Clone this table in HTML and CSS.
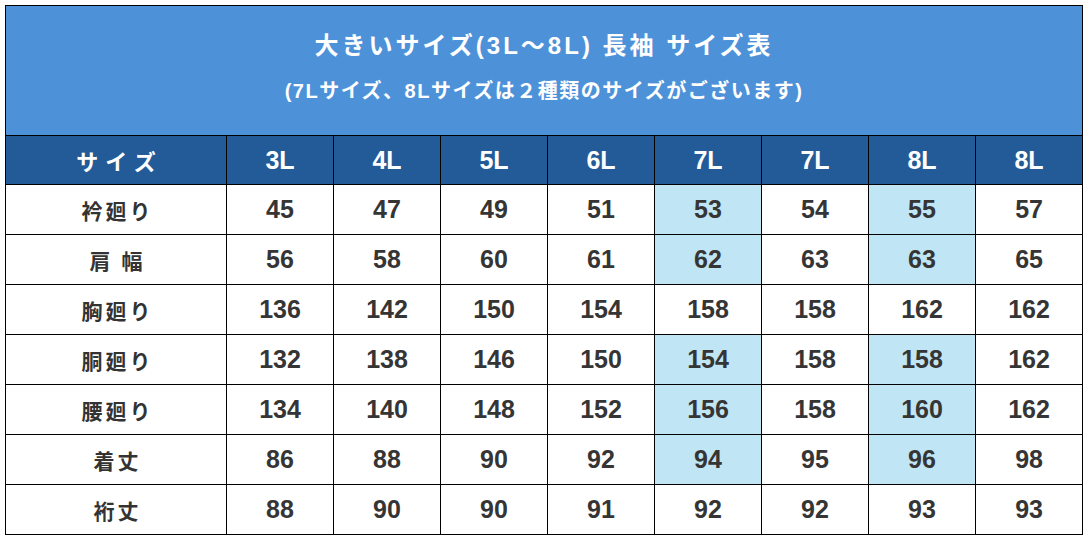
FILE: index.html
```html
<!DOCTYPE html>
<html lang="ja">
<head>
<meta charset="utf-8">
<link rel="stylesheet" href="styles.css">
</head>
<body>
<table class="size-table">
  <colgroup>
    <col class="col-label">
    <col class="col-size"><col class="col-size"><col class="col-size"><col class="col-size">
    <col class="col-size"><col class="col-size"><col class="col-size"><col class="col-size">
  </colgroup>
  <tr>
    <th colspan="9" class="title-cell">
      <div class="title">大きいサイズ(3L～8L) 長袖 サイズ表</div>
      <div class="subtitle">(7Lサイズ、8Lサイズは２種類のサイズがございます)</div>
    </th>
  </tr>
  <tr class="head">
    <th class="label-col">サイズ</th>
    <th>3L</th><th>4L</th><th>5L</th><th>6L</th><th>7L</th><th>7L</th><th>8L</th><th>8L</th>
  </tr>
  <tr>
    <td class="label">衿廻り</td>
    <td>45</td><td>47</td><td>49</td><td>51</td><td class="hl">53</td><td>54</td><td class="hl">55</td><td>57</td>
  </tr>
  <tr>
    <td class="label">肩 幅</td>
    <td>56</td><td>58</td><td>60</td><td>61</td><td class="hl">62</td><td>63</td><td class="hl">63</td><td>65</td>
  </tr>
  <tr>
    <td class="label">胸廻り</td>
    <td>136</td><td>142</td><td>150</td><td>154</td><td>158</td><td>158</td><td>162</td><td>162</td>
  </tr>
  <tr>
    <td class="label">胴廻り</td>
    <td>132</td><td>138</td><td>146</td><td>150</td><td class="hl">154</td><td>158</td><td class="hl">158</td><td>162</td>
  </tr>
  <tr>
    <td class="label">腰廻り</td>
    <td>134</td><td>140</td><td>148</td><td>152</td><td class="hl">156</td><td>158</td><td class="hl">160</td><td>162</td>
  </tr>
  <tr>
    <td class="label">着丈</td>
    <td>86</td><td>88</td><td>90</td><td>92</td><td class="hl">94</td><td>95</td><td class="hl">96</td><td>98</td>
  </tr>
  <tr>
    <td class="label">裄丈</td>
    <td>88</td><td>90</td><td>90</td><td>91</td><td>92</td><td>92</td><td>93</td><td>93</td>
  </tr>
</table>
</body>
</html>
```

FILE: styles.css
```css
html, body {
  margin: 0;
  padding: 0;
  background: #ffffff;
}
body {
  padding: 5px;
  font-family: "Liberation Sans", "Noto Sans CJK JP", sans-serif;
}
.size-table {
  border-collapse: collapse;
  width: 1077px;
  table-layout: fixed;
}
.col-label {
  width: 221px;
}
.col-size {
  width: 107px;
}
.size-table th,
.size-table td {
  border: 1px solid #000;
  padding: 0;
  text-align: center;
  vertical-align: middle;
}
.title-cell {
  background: #4d92d9;
  color: #fff;
  height: 130px;
  box-sizing: border-box;
  padding-bottom: 6px !important;
}
.title {
  font-family: "Liberation Sans", "Noto Sans CJK JP", sans-serif;
  font-weight: bold;
  font-size: 24px;
  line-height: 30px;
  letter-spacing: 3px;
  margin-bottom: 16px;
}
.subtitle {
  font-family: "Liberation Sans", "Noto Sans CJK JP", sans-serif;
  font-weight: bold;
  font-size: 20px;
  line-height: 28px;
  letter-spacing: 1.5px;
}
.head th {
  background: #225b98;
  color: #fff;
  height: 48px;
  font-size: 25px;
  font-weight: bold;
}
.head th.label-col {
  font-family: "Noto Sans CJK JP", sans-serif;
  font-size: 22px;
  letter-spacing: 7px;
  text-indent: 7px;
}
.size-table td {
  height: 49px;
  font-size: 25px;
  font-weight: bold;
  color: #353535;
}
.size-table td.label {
  font-family: "Noto Sans CJK JP", sans-serif;
  font-size: 21px;
  letter-spacing: 3px;
  text-indent: 3px;
  color: #333;
}
.size-table td.hl {
  background: #c0e5f4;
}
```
